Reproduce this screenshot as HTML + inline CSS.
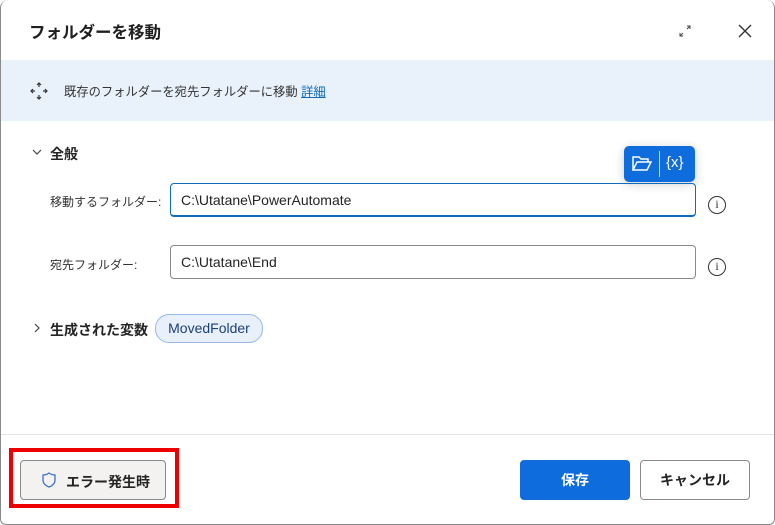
<!DOCTYPE html>
<html><head><meta charset="utf-8"><style>
*{margin:0;padding:0;box-sizing:border-box}
body{width:775px;height:525px;background:#fff;font-family:"Liberation Sans","Noto Sans CJK JP",sans-serif;color:#242424;position:relative;overflow:hidden}
.frame{position:absolute;left:0;top:0;width:775px;height:525px;border:1px solid #8a8a8a;border-top:none;border-radius:8px 8px 6px 6px}
.abs{position:absolute}
.title{left:29px;top:19px;font-size:16.5px;font-weight:bold;color:#1f1f1f}
.banner{left:1px;top:60px;width:773px;height:61px;background:#e9f1fb}
.btxt{left:64px;top:82px;font-size:12.3px;color:#333}
.btxt a{color:#0f6cbd;text-decoration:underline}
.lbl{font-size:12px;color:#333}
.inp{height:34px;border:1px solid #8a8a8a;border-radius:4px;font-size:14px;padding:8px 10px;color:#242424}
.info{width:18px;height:18px;border:1.5px solid #333;border-radius:50%;font-size:12px;text-align:center;line-height:15px;font-family:"Liberation Serif",serif;color:#333}
.btn{height:40px;border-radius:4px;font-size:14px;font-weight:bold;text-align:center;line-height:38px}
</style></head><body>
<div class="frame"></div>
<div class="abs title">フォルダーを移動</div>
<svg class="abs" style="left:678px;top:24px" width="14" height="14" viewBox="0 0 14 14"><path d="M9 2h3v3M12 2L9 5M5 12H2V9M2 12l3-3" stroke="#444" fill="none" stroke-width="1"/></svg>
<svg class="abs" style="left:738px;top:24px" width="14" height="14" viewBox="0 0 14 14"><path d="M1 1l12 12M13 1L1 13" stroke="#333" stroke-width="1.4"/></svg>
<div class="abs banner"></div>
<svg class="abs" style="left:30px;top:82px" width="18" height="18" viewBox="0 0 18 18" fill="none" stroke="#333" stroke-width="1.2"><path d="M9 1v4M7 3l2-2 2 2M9 17v-4M7 15l2 2 2-2M1 9h4M3 7l-2 2 2 2M17 9h-4M15 7l2 2-2 2"/></svg>
<div class="abs btxt">既存のフォルダーを宛先フォルダーに移動 <a>詳細</a></div>
<svg class="abs" style="left:32px;top:147px" width="10" height="10" viewBox="0 0 10 10"><path d="M1 3l4 4 4-4" stroke="#444" fill="none" stroke-width="1.2"/></svg>
<div class="abs" style="left:50px;top:144px;font-size:14px;font-weight:bold">全般</div>
<div class="abs" style="left:624px;top:146px;width:71px;height:36px;background:#0f6cdc;border-radius:5px;box-shadow:0 2px 10px rgba(0,0,0,.2)">
<svg class="abs" style="left:8px;top:9px" width="20" height="17" viewBox="0 0 20 17" fill="none" stroke="#fff" stroke-width="1.5"><path d="M1 15V2h6l2 2h7v3M1 15l4-8h14l-4 8z"/></svg>
<div class="abs" style="left:35px;top:5px;width:1px;height:26px;background:#fff;opacity:.8"></div>
<div class="abs" style="left:42px;top:8px;color:#fff;font-size:15px">{x}</div>
</div>
<div class="abs lbl" style="left:50px;top:193px">移動するフォルダー:</div>
<div class="abs inp" style="left:170px;top:183px;width:526px;border-color:#0f6cbd;border-bottom-width:2px">C:\Utatane\PowerAutomate</div>
<div class="abs info" style="left:708px;top:196px">i</div>
<div class="abs lbl" style="left:50px;top:256px">宛先フォルダー:</div>
<div class="abs inp" style="left:170px;top:245px;width:526px">C:\Utatane\End</div>
<div class="abs info" style="left:708px;top:258px">i</div>
<svg class="abs" style="left:32px;top:323px" width="10" height="10" viewBox="0 0 10 10"><path d="M3 1l4 4-4 4" stroke="#444" fill="none" stroke-width="1.2"/></svg>
<div class="abs" style="left:50px;top:320px;font-size:14px;font-weight:bold">生成された変数</div>
<div class="abs" style="left:155px;top:314px;width:108px;height:29px;border:1px solid #97b8e8;background:#e8f0fb;border-radius:14px;font-size:14px;color:#1a3f7a;line-height:27px;text-align:center">MovedFolder</div>
<div class="abs" style="left:1px;top:434px;width:773px;height:1px;background:#e3e3e3"></div>
<div class="abs" style="left:9px;top:448px;width:170px;height:60px;border:4px solid #ee0000"></div>
<div class="abs btn" style="left:20px;top:460px;width:146px;border:1px solid #8a8a8a;background:#f3f2f1"></div>
<svg class="abs" style="left:42px;top:472px" width="14" height="16" viewBox="0 0 14 16" fill="none" stroke="#3d6fd0" stroke-width="1.3"><path d="M7 1C5 2.5 3 3 1 3v5c0 3.5 3 6 6 7 3-1 6-3.5 6-7V3C11 3 9 2.5 7 1z"/></svg>
<div class="abs" style="left:66px;top:472px;font-size:14px;font-weight:bold">エラー発生時</div>
<div class="abs btn" style="left:520px;top:460px;width:110px;background:#0f6cdc;color:#fff;border:1px solid #0f6cdc">保存</div>
<div class="abs btn" style="left:640px;top:460px;width:110px;border:1px solid #8a8a8a;background:#fff">キャンセル</div>
</body></html>
